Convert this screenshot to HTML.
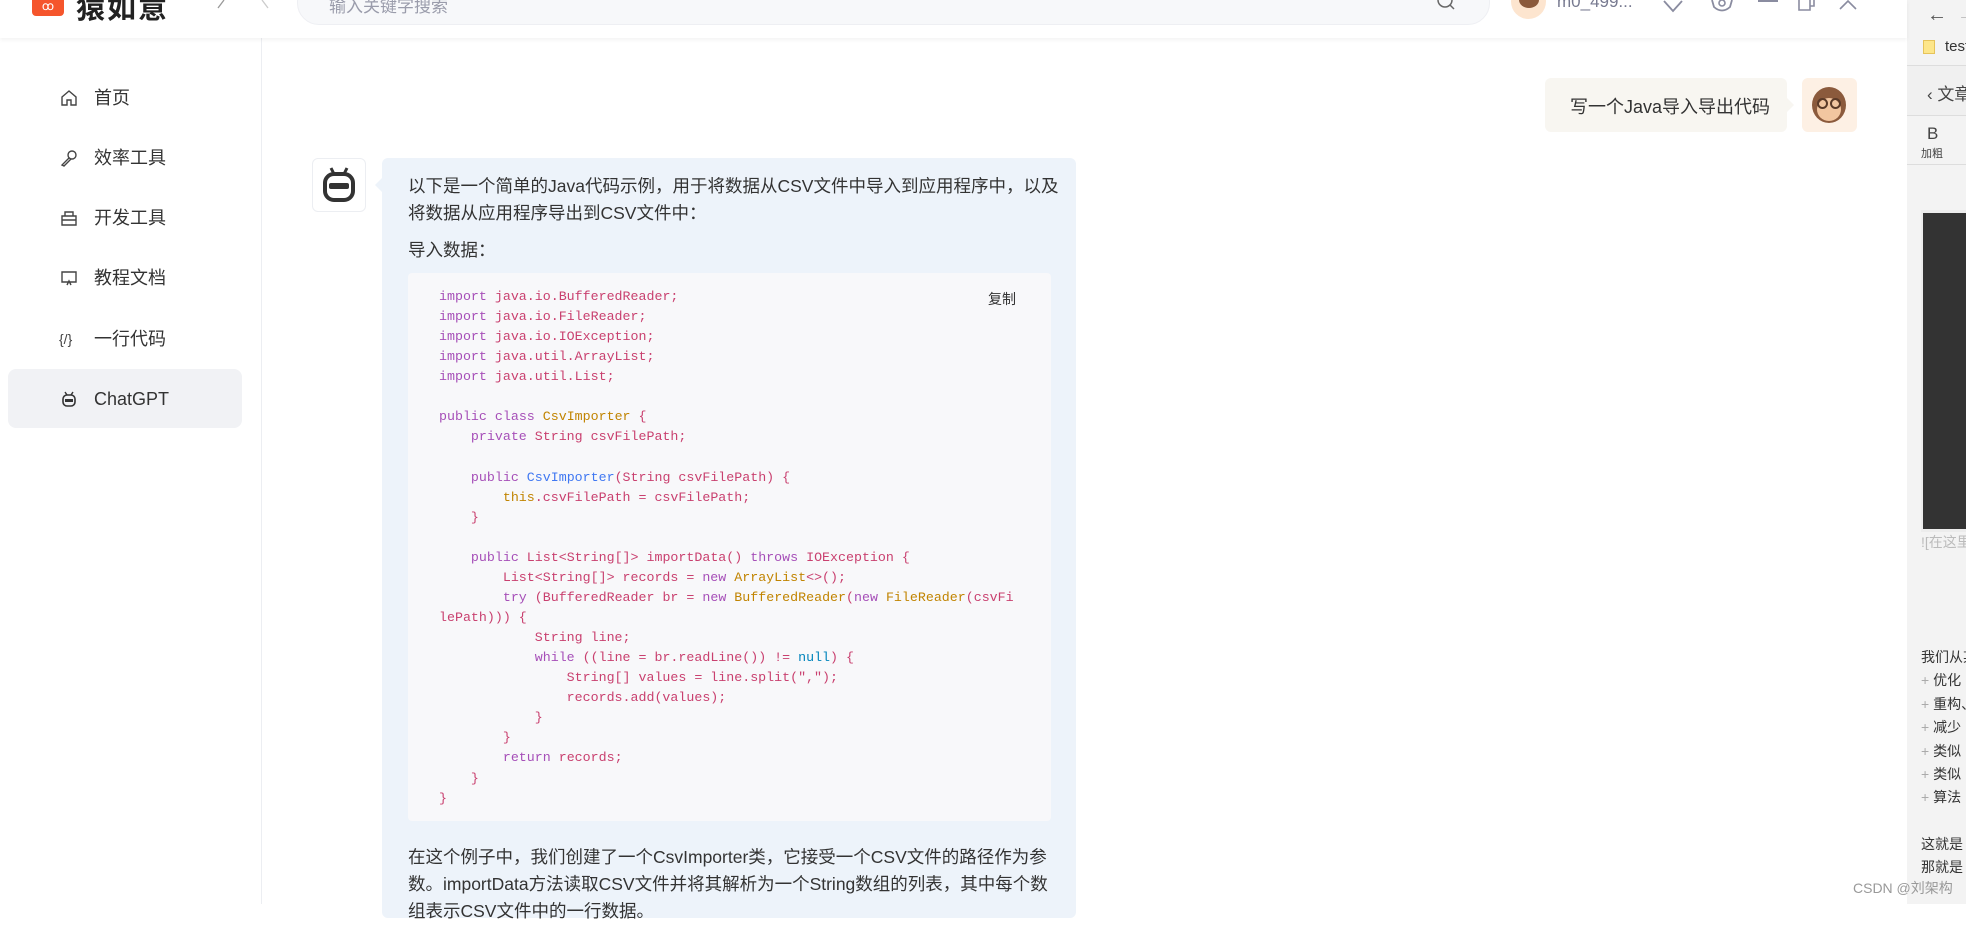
<!DOCTYPE html>
<html><head><meta charset="utf-8">
<style>
*{margin:0;padding:0;box-sizing:border-box}
body{width:1966px;height:904px;overflow:hidden;background:#fff;position:relative;font-family:"Liberation Sans","Noto Sans CJK SC",sans-serif;color:#333}
.a{position:absolute}
.hdr{left:0;top:0;width:1907px;height:38px;background:#fff;box-shadow:0 2px 4px rgba(0,0,0,.05);z-index:2}
.side{left:0;top:38px;width:262px;height:866px;border-right:1px solid #eceef2}
.nav{position:absolute;left:0;width:262px;height:20px;font-size:18px;color:#333;line-height:20px}
.nav span{position:absolute;left:94px}
.nav svg{position:absolute;left:60px;top:1px}
code,pre{font-family:"Liberation Mono","Noto Sans CJK SC",monospace}
pre{font-size:13.3px;line-height:20.07px;color:#c9406f}
.k{color:#a64fb8}.t{color:#c18401}.f{color:#4078f2}.n{color:#0184bc}
.p{font-size:17.5px;color:#333;line-height:27px}
.rp{left:1907px;top:0;width:59px;height:904px;background:#f3f3f3;overflow:hidden;font-size:14px;color:#333;white-space:nowrap}
</style></head><body>

<div class="a hdr">
  <div class="a" style="left:32px;top:-14px;width:32px;height:30px;background:#f5552c;border-radius:4px;color:#fff;font-size:12px;text-align:center;line-height:40px">ꝏ</div>
  <div class="a" style="left:76px;top:-15px;font-size:29px;font-weight:bold;color:#222;letter-spacing:2px">猿如意</div>
  <svg class="a" style="left:214px;top:0" width="14" height="12"><path d="M10 0 L4 8" stroke="#999" fill="none" stroke-width="1.3"/></svg>
  <svg class="a" style="left:258px;top:0" width="14" height="12"><path d="M4 0 L10 8" stroke="#ccc" fill="none" stroke-width="1.3"/></svg>
  <div class="a" style="left:297px;top:-20px;width:1193px;height:45px;background:#f7f8fa;border:1px solid #eeeff3;border-radius:22px"></div>
  <div class="a" style="left:329px;top:-8px;font-size:17px;color:#9a9cab">输入关键字搜索</div>
  <svg class="a" style="left:1436px;top:0" width="20" height="12"><circle cx="9" cy="0" r="7" stroke="#666" fill="none" stroke-width="1.5"/><path d="M14 5 L18 9" stroke="#666" stroke-width="1.5"/></svg>
  <div class="a" style="left:1511px;top:-16px;width:35px;height:35px;border-radius:50%;background:#fde5cf"></div>
  <div class="a" style="left:1519px;top:-8px;width:20px;height:16px;border-radius:50%;background:#8b5a3c"></div>
  <div class="a" style="left:1557px;top:-8px;font-size:17px;color:#777a90">m0_499...</div>
  <svg class="a" style="left:1662px;top:0" width="22" height="14"><path d="M2 1 L11 11 L20 1" stroke="#8a8ca0" fill="none" stroke-width="1.8"/></svg>
  <svg class="a" style="left:1710px;top:0" width="24" height="14"><path d="M2 0 L4 7 Q12 14 20 7 L22 0" stroke="#8a8ca0" fill="none" stroke-width="1.8"/><circle cx="12" cy="3" r="3" stroke="#8a8ca0" fill="none" stroke-width="1.6"/></svg>
  <div class="a" style="left:1758px;top:0;width:20px;height:2px;background:#8a8ca0"></div>
  <svg class="a" style="left:1797px;top:0" width="20" height="12"><path d="M2 0 V10 H13 V0 M6 0 V-2 H17 V6 H13" stroke="#8a8ca0" fill="none" stroke-width="1.6"/></svg>
  <svg class="a" style="left:1838px;top:0" width="20" height="12"><path d="M2 9 L10 1 L18 9" stroke="#8a8ca0" fill="none" stroke-width="1.6"/></svg>
</div>

<div class="a side">
  <div class="a" style="left:8px;top:331px;width:234px;height:59px;background:#f1f2f5;border-radius:8px"></div>
  <div class="nav" style="top:50px"><svg width="18" height="18"><path d="M2 8 L9 2 L16 8 V16 H11 V11 H7 V16 H2 Z" stroke="#444" fill="none" stroke-width="1.4"/></svg><span>首页</span></div>
  <div class="nav" style="top:110px"><svg width="18" height="18"><circle cx="12" cy="6" r="4" stroke="#444" fill="none" stroke-width="1.4"/><path d="M9 9 L2 16 L4 17 L11 10" stroke="#444" fill="none" stroke-width="1.4"/></svg><span>效率工具</span></div>
  <div class="nav" style="top:170px"><svg width="18" height="18"><path d="M2 7 H16 V16 H2 Z M2 11 H16 M5 7 V3 H13 V7" stroke="#444" fill="none" stroke-width="1.4"/></svg><span>开发工具</span></div>
  <div class="nav" style="top:230px"><svg width="18" height="18"><path d="M2 3 H16 V13 H2 Z M7 16 L9 12 L11 16" stroke="#444" fill="none" stroke-width="1.4"/></svg><span>教程文档</span></div>
  <div class="nav" style="top:291px"><span style="left:59px;font-size:14px;color:#444">{/}</span><span>一行代码</span></div>
  <div class="nav" style="top:351px"><svg width="18" height="18"><path d="M5 2 L7 5 M13 2 L11 5" stroke="#333" stroke-width="1.4"/><rect x="3" y="5" width="12" height="11" rx="4" stroke="#333" fill="none" stroke-width="1.6"/><rect x="5" y="9" width="8" height="3" fill="#333"/></svg><span>ChatGPT</span></div>
</div>

<!-- user bubble -->
<div class="a" style="left:1545px;top:78px;width:242px;height:54px;background:#f8f6f1;border-radius:6px"></div>
<div class="a" style="left:1787px;top:98px;width:0;height:0;border-top:7px solid transparent;border-bottom:7px solid transparent;border-left:7px solid #f8f6f1"></div>
<div class="a" style="left:1570px;top:93px;font-size:18px;color:#333">写一个Java导入导出代码</div>
<div class="a" style="left:1802px;top:78px;width:55px;height:54px;background:#fdf0e4;border-radius:6px"></div>
<div class="a" style="left:1812px;top:87px;width:34px;height:36px;border-radius:50%;background:#8b5a3c"></div>
<div class="a" style="left:1817px;top:98px;width:24px;height:23px;border-radius:50%;background:#f2c6a0"></div>
<div class="a" style="left:1817px;top:98px;width:11px;height:11px;border-radius:50%;border:2px solid #5a3a28"></div>
<div class="a" style="left:1830px;top:98px;width:11px;height:11px;border-radius:50%;border:2px solid #5a3a28"></div>

<!-- bot -->
<div class="a" style="left:312px;top:158px;width:54px;height:54px;background:#fff;border:1px solid #eceef2;border-radius:6px"></div>
<svg class="a" style="left:319px;top:166px" width="40" height="40"><path d="M12 2 L15 8 M28 2 L25 8" stroke="#333" stroke-width="3"/><rect x="6" y="8" width="28" height="26" rx="9" stroke="#333" fill="none" stroke-width="4"/><rect x="10" y="17" width="20" height="6" rx="2" fill="#333"/></svg>
<div class="a" style="left:382px;top:158px;width:694px;height:760px;background:#edf3fa;border-radius:6px"></div>
<div class="a" style="left:375px;top:178px;width:0;height:0;border-top:7px solid transparent;border-bottom:7px solid transparent;border-right:7px solid #edf3fa"></div>
<div class="a p" style="left:408px;top:173px;width:650px;white-space:nowrap">以下是一个简单的Java代码示例，用于将数据从CSV文件中导入到应用程序中，以及<br>将数据从应用程序导出到CSV文件中：</div>
<div class="a p" style="left:408px;top:237px">导入数据：</div>
<div class="a" style="left:408px;top:273px;width:643px;height:548px;background:#f8f8fa;border-radius:4px"></div>
<div class="a" style="left:988px;top:289px;font-size:14px;color:#333">复制</div>
<pre class="a" style="left:439px;top:287px"><span class="k">import</span> java.io.BufferedReader;
<span class="k">import</span> java.io.FileReader;
<span class="k">import</span> java.io.IOException;
<span class="k">import</span> java.util.ArrayList;
<span class="k">import</span> java.util.List;

<span class="k">public</span> <span class="k">class</span> <span class="t">CsvImporter</span> {
    <span class="k">private</span> String csvFilePath;

    <span class="k">public</span> <span class="f">CsvImporter</span>(String csvFilePath) {
        <span class="t">this</span>.csvFilePath = csvFilePath;
    }

    <span class="k">public</span> List&lt;String[]&gt; importData() <span class="k">throws</span> IOException {
        List&lt;String[]&gt; records = <span class="k">new</span> <span class="t">ArrayList</span>&lt;&gt;();
        <span class="k">try</span> (BufferedReader br = <span class="k">new</span> <span class="t">BufferedReader</span>(<span class="k">new</span> <span class="t">FileReader</span>(csvFi
lePath))) {
            String line;
            <span class="k">while</span> ((line = br.readLine()) != <span class="n">null</span>) {
                String[] values = line.split(",");
                records.add(values);
            }
        }
        <span class="k">return</span> records;
    }
}</pre>
<div class="a p" style="left:408px;top:844px;width:650px">在这个例子中，我们创建了一个CsvImporter类，它接受一个CSV文件的路径作为参数。importData方法读取CSV文件并将其解析为一个String数组的列表，其中每个数组表示CSV文件中的一行数据。</div>

<!-- right panel -->
<div class="a rp">
  <div class="a" style="left:20px;top:4px;font-size:20px;color:#555">←</div>
  <div class="a" style="left:50px;top:4px;font-size:20px;color:#bbb">→</div>
  <div class="a" style="left:16px;top:40px;width:12px;height:14px;background:#fde68a;border:1px solid #e6c35a"></div>
  <div class="a" style="left:38px;top:38px;font-size:15px">test</div>
  <div class="a" style="left:0;top:65px;width:59px;height:51px;background:#f0f0f0;border-top:1px solid #ddd;border-bottom:1px solid #ddd"></div>
  <div class="a" style="left:20px;top:80px;font-size:17px;color:#444">‹ 文章</div>
  <div class="a" style="left:20px;top:124px;font-size:17px;color:#444">B</div>
  <div class="a" style="left:14px;top:145px;font-size:11px;color:#444">加粗</div>
  <div class="a" style="left:0;top:164px;width:59px;height:1px;background:#ddd"></div>
  <div class="a" style="left:14px;top:210px;width:45px;height:322px;background:#ececec"></div>
  <div class="a" style="left:16px;top:213px;width:43px;height:316px;background:#333"></div>
  <div class="a" style="left:14px;top:532px;font-size:14px;color:#bbb">![在这里</div>
  <div class="a" style="left:14px;top:646px;font-size:14px;line-height:23.4px">我们从某<br><span style="color:#aaa">+ </span>优化<br><span style="color:#aaa">+ </span>重构、<br><span style="color:#aaa">+ </span>减少<br><span style="color:#aaa">+ </span>类似<br><span style="color:#aaa">+ </span>类似<br><span style="color:#aaa">+ </span>算法</div>
  <div class="a" style="left:14px;top:833px;font-size:14px;line-height:23.4px">这就是<br>那就是</div>
</div>
<div class="a" style="left:1853px;top:878px;font-size:14px;color:#999;white-space:nowrap;z-index:5">CSDN @刘架构</div>
</body></html>
